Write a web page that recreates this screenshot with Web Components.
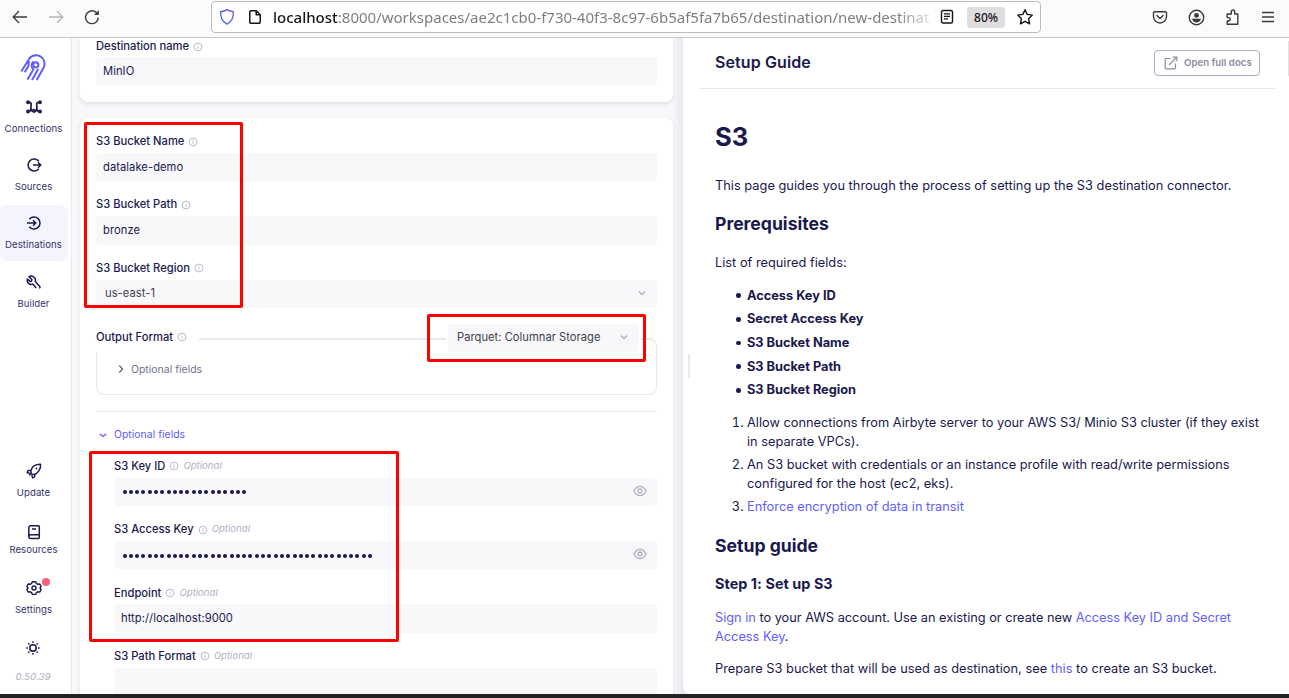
<!DOCTYPE html>
<html lang="en">
<head>
<meta charset="utf-8">
<title>Airbyte</title>
<style>
html,body{margin:0;padding:0;width:1289px;height:698px;overflow:hidden;background:#f8f8fb;font-family:Inter,sans-serif;color:#1a194d}
</style>
</head>
<body>
<app-window></app-window>
<script>
const ICONS={
back:['0 0 16 16','<path d="M15 8H1.5M7 2 1.2 8 7 14" stroke-width="1.3"/>'],
forward:['0 0 16 16','<path d="M1 8h13.5M9 2l5.8 6L9 14" stroke-width="1.3"/>'],
reload:['0 0 16 16','<path d="M14.3 8.6a6.4 6.4 0 1 1-2.2-5.2l2 1.9" stroke-width="1.4"/><path d="M14.9 1.2v4.9H10z" fill="currentColor" stroke="none"/>'],
shield:['0 0 16 18','<defs><linearGradient id="g" x1="0" y1="1" x2="1" y2="0"><stop stop-color="#2a62e8"/><stop offset="1" stop-color="#7a55e8"/></linearGradient></defs><path d="M8 1.6c2 1.3 4 1.9 6.300 2.100 0 6-.9 9.500-6.300 12.500C2.600 13.200 1.700 9.700 1.700 3.700 4 3.500 6 2.900 8 1.600z" stroke="url(#g)" stroke-width="1.300"/>'],
page:['0 0 14 16','<path d="M8.200 1.700H3A1.200 1.200 0 0 0 1.800 2.900v10.200A1.200 1.200 0 0 0 3 14.300h8a1.200 1.200 0 0 0 1.200-1.200V5.700zv4h4" stroke-width="1.500" stroke-linejoin="round"/>'],
reader:['0 0 14 16','<rect x="1.500" y="1.500" width="11" height="12.500" rx="1.500" stroke-width="1.400"/><path d="M4 4.800h6M4 7.300h6M4 9.800h4" stroke-width="1.200"/>'],
star:['0 0 18 18','<path d="M9 1.700l2.200 4.700 5.100.7-3.700 3.600.9 5.100L9 13.300l-4.500 2.500.9-5.100L1.700 7.100l5.100-.7z" stroke-width="1.400" stroke-linejoin="round"/>'],
pocket:['0 0 16 16','<path d="M2.500 2.700h11a1 1 0 0 1 1 1v3.800a6.500 6.500 0 0 1-13 0V3.700a1 1 0 0 1 1-1zM4.900 6.500 8 9.500l3.100-3" stroke-width="1.400" stroke-linecap="round" stroke-linejoin="round"/>'],
account:['0 0 16 16','<circle cx="8" cy="8" r="6.800" stroke-width="1.300"/><circle cx="8" cy="6" r="2.300" fill="currentColor" stroke="none"/><path d="M3.900 9.200h8.200c-.4 2.500-2 3.500-4.100 3.500s-3.700-1-4.100-3.500z" fill="currentColor" stroke="none"/>'],
puzzle:['0 0 16 18','<path d="M2.200 16.300h10.600V6H9.700V4c0-1.300-.7-2-1.700-2s-1.700.7-1.700 2v2H2.200v3.600h1.400c1.100 0 1.700.7 1.700 1.700s-.6 1.700-1.700 1.700H2.200z" stroke-width="1.400" stroke-linejoin="round"/>'],
menu:['0 0 14 14','<path d="M1 2.500h12M1 7h12M1 11.500h12" stroke-width="1.300"/>'],
logo:['0 0 26 27','<path d="M1.300 17.600 9.500 4.300C11 2.200 13.300 1.200 16 1.200c6.500 0 10.600 6.800 7.300 13L16.700 26M4.700 18.200l3.400-5.600c1-1.800.2-3.600.9-5.600M7.500 25.500l5.800-10c-2.400-2.200-2.200-6.200.2-8M12 26l6.200-11" stroke-width="2"/><circle cx="15.800" cy="10.800" r="2.600" stroke-width="2"/>'],
connections:['0 0 16 14','<g stroke-width="1.700"><circle cx="2" cy="2.300" r="1.100"/><circle cx="2" cy="11.500" r="1.100"/><circle cx="14" cy="2.300" r="1.100"/><circle cx="14" cy="11.500" r="1.100"/><circle cx="8" cy="10.800" r="1.300"/><path d="M3 2.300c3 0 2 2 2 4.500s-.3 4.500-2 4.700M5 8.500c0 2 .8 2.500 2 2.500M13 2.300c-3 0-2.200 2-2.200 4.500s.3 4.700 2.200 4.700M10.800 8.500c0 2-.5 2.400-1.800 2.400"/></g>'],
source:['0 0 16 16','<path d="M12.800 4.300a6 6 0 1 0 0 7.400M7 8h7.800M12 5.300 14.700 8 12 10.700" stroke-width="1.500"/>'],
destination:['0 0 16 16','<path d="M3.300 4.300a6 6 0 1 1 0 7.400M1 8h8.500M7 5.300 9.700 8 7 10.700" stroke-width="1.500"/>'],
builder:['0 0 16 16','<path d="M7.300 2.600C5.800 1.800 4.200 1.900 3 2.700l2.800 2.900-.3 1.600-1.600.2L1.500 5c-.6 2.200.2 4.200 1.900 5 1.200.6 2.400.5 3.300.1l3.500 4M7.300 2.600c1.800 1 2.600 2.800 2 5l4.400 4.800c.5.700.3 1.500-.4 1.800" stroke-width="1.500" stroke-linejoin="round"/>'],
rocket:['0 0 16 16','<path d="M6 11.200C3.900 9.500 5 4.700 8.400 2.700 10.300 1.600 12.700 1.200 14.600 1.300c.2 2-.2 4.300-1.600 6.300C11 10.500 8 12 6 11.200zM4.800 7.300l-2.800.2-.9 2.200 3.200.7M8.900 11.200l-.3 2.600-2 1.100-.9-3M4.700 10.700l-1.500 1.700" stroke-width="1.400" stroke-linejoin="round"/><circle cx="10.500" cy="5.500" r=".9" fill="currentColor" stroke="none"/>'],
book:['0 0 14 16','<path d="M3.800 1.700h7.500a1 1 0 0 1 1 1v10.800a1 1 0 0 1-1 1H3.800a2 2 0 0 1-2-2V3.700a2 2 0 0 1 2-2zM2 12c.4-1 1-1.300 2-1.300h8M5 5h4" stroke-width="1.500"/>'],
gear:['0 0 16 16','<path d="M6.300 1.700h3.400l.7 1.800 1.400.8 2-.3 1.300 2.600L14 8l1.100 1.500-1.400 2.600-1.900-.3-1.400.8-.7 1.800H6.300l-.7-1.800-1.400-.8-1.900.3L.9 9.500 2 8 .9 6.600 2.200 4l2 .3 1.400-.8z" stroke-width="1.400" stroke-linejoin="round"/><circle cx="8" cy="8" r="2" stroke-width="1.400"/>'],
sun:['0 0 16 16','<circle cx="8" cy="8" r="3.200" stroke-width="1.500"/><path d="M8 1.300v1.600M8 13.100v1.600M1.300 8h1.600M13.100 8h1.600M3.300 3.300l1.100 1.100M11.600 11.600l1.100 1.100M3.300 12.700l1.100-1.100M11.600 4.400l1.100-1.100" stroke-width="1.400"/>'],
info:['0 0 10 10','<circle cx="5" cy="5" r="3.900" stroke-width=".9"/><path d="M5 4.500v2.600M5 2.700v1" stroke-width=".9"/>'],
down:['0 0 10 10','<path d="M1.800 3.500 5 6.500l3.200-3" stroke-width="1.300"/>'],
downbold:['0 0 10 10','<path d="M1.800 3.800 5 6.500l3.200-2.700" stroke-width="1.600" opacity=".85"/>'],
right:['0 0 10 10','<path d="M3.300 1.500 6.500 5 3.300 8.500" stroke-width="1.500"/>'],
eye:['0 0 14 12','<path d="M.9 6C2.500 2.800 4.500 1.300 7 1.300S11.500 2.800 13.100 6C11.500 9.200 9.500 10.700 7 10.700S2.500 9.200.9 6z" stroke-width="1.300"/><circle cx="7" cy="6" r="2" stroke-width="1.300"/>'],
external:['0 0 14 14','<path d="M6.500 2.500H2.200a1 1 0 0 0-1 1v8.300a1 1 0 0 0 1 1h8.300a1 1 0 0 0 1-1V7.500M8.700 1.200h4.100v4.100M12.600 1.400 5 9" stroke-width="1.200"/>']
};
class UiIcon extends HTMLElement{
  connectedCallback(){
    const [box,body]=ICONS[this.getAttribute('name')];
    const w=this.getAttribute('w'),h=this.getAttribute('h')||w;
    this.attachShadow({mode:'open'}).innerHTML=`<style>:host{display:block;flex:none;width:${w}px;height:${h}px}svg{display:block;width:100%;height:100%}</style><svg viewBox="${box}" fill="none" stroke="currentColor">${body}</svg>`;
  }
}
customElements.define('ui-icon',UiIcon);

const define=(name,render)=>customElements.define(name,class extends HTMLElement{
  connectedCallback(){this.attachShadow({mode:'open'}).innerHTML=render(this);}
});

define('browser-bar',()=>`<style>
:host{display:flex;align-items:center;box-sizing:border-box;height:38px;padding:0 14px 3px 12px;background:#fbfbfb;border-bottom:1px solid #c6c6c8;color:#3b3b3f}
.nav{display:flex;gap:20px;width:199px}
.nav ui-icon:nth-child(2){color:#b5b5b8}
.url{display:flex;align-items:center;box-sizing:border-box;width:830px;height:32px;padding:0 6px 0 7px;border:1px solid #bdbdc0;border-radius:4px;background:#fff;color:#15141a}
.address{flex:1;margin-left:11px;margin-right:9px;white-space:nowrap;font:15px/22px "Noto Sans",sans-serif;letter-spacing:0;color:#7e7e82;-webkit-mask-image:linear-gradient(90deg,#000 95%,transparent 101%)}
.address b{font-weight:500;color:#15141a}
.zoom{box-sizing:border-box;width:38px;height:21px;margin:0 11px 0 13px;border-radius:3px;background:#dededf;font:500 12px/21px "Noto Sans",sans-serif;text-align:center}
.tools{display:flex;align-items:center;gap:20px;margin-left:auto}
</style>
<div class="nav"><ui-icon name="back" w="16"></ui-icon><ui-icon name="forward" w="16"></ui-icon><ui-icon name="reload" w="16"></ui-icon></div>
<div class="url"><ui-icon name="shield" w="16" h="18"></ui-icon><ui-icon name="page" w="14" h="16" style="margin-left:13px"></ui-icon>
<div class="address"><b>localhost</b>:8000/workspaces/ae2c1cb0-f730-40f3-8c97-6b5af5fa7b65/destination/new-destinat</div>
<ui-icon name="reader" w="14" h="16"></ui-icon><div class="zoom">80%</div><ui-icon name="star" w="18"></ui-icon></div>
<div class="tools"><ui-icon name="pocket" w="16"></ui-icon><ui-icon name="account" w="17"></ui-icon><ui-icon name="puzzle" w="16" h="18"></ui-icon><ui-icon name="menu" w="14"></ui-icon></div>`);

define('nav-item',el=>`<style>
:host{display:flex;flex-direction:column;align-items:center;box-sizing:border-box;position:relative;width:68px;height:56px;padding-top:10px;border-radius:8px;color:#1a194d;font-size:9.600px;line-height:12px}
:host([active]){background:#f4f4ff}
ui-icon{margin-right:1px}
span{margin-top:var(--gap,8px);margin-right:1px;letter-spacing:.06px;color:#34336b}
i{position:absolute;left:42px;top:2px;width:8px;height:8px;border-radius:50%;background:#ff5e7b}
</style><ui-icon name="${el.getAttribute('icon')}" w="16"></ui-icon><span><slot></slot></span>${el.hasAttribute('dot')?'<i></i>':''}`);

define('side-nav',()=>`<style>
:host{display:flex;flex-direction:column;box-sizing:border-box;width:72px;background:#fff;border-right:1px solid #e8e8ef}
.logo{padding:16px 0 7.500px 20px;color:#615eff}
.top{display:flex;flex-direction:column;gap:2.400px}
.bottom{margin-top:auto;padding-bottom:10px}
.sun{padding:0 0 0 25px}
.version{width:66px;margin-top:14px;text-align:center;font-size:9.600px;line-height:14px;letter-spacing:.1px;font-style:italic;color:#afafc1}
</style>
<div class="logo"><ui-icon name="logo" w="26" h="27"></ui-icon></div>
<div class="top"><nav-item icon="connections">Connections</nav-item><nav-item icon="source">Sources</nav-item><nav-item icon="destination" active>Destinations</nav-item><nav-item icon="builder">Builder</nav-item></div>
<div class="bottom"><nav-item icon="rocket" style="height:60px;padding-top:3px;--gap:8px">Update</nav-item><nav-item icon="book" style="padding-top:4px;--gap:4px">Resources</nav-item><nav-item icon="gear" style="height:64px;padding-top:4px" dot>Settings</nav-item>
<div class="sun"><ui-icon name="sun" w="16"></ui-icon></div><div class="version">0.50.39</div></div>`);

define('field-label',el=>`<style>
:host{display:flex;align-items:center;height:16px;font-size:11.200px;font-weight:500;line-height:16px;color:#1a194d;white-space:nowrap}
ui-icon{margin:1px 0 0 4px;color:#b3b3c6}
em{margin-left:4px;font-weight:400;font-size:9.600px;color:#afafc1}
</style><slot></slot><ui-icon name="info" w="10"></ui-icon>${el.hasAttribute('optional')?'<em>Optional</em>':''}`);

define('form-field',el=>{
const t=el.getAttribute('type')||'text',v=el.getAttribute('value')||'';
const n=+el.getAttribute('count');
return `<style>
:host{display:block;height:49px;margin-bottom:14.350px}
.input{display:flex;align-items:center;justify-content:space-between;box-sizing:border-box;height:29px;margin-top:var(--input-gap,4px);padding:0 10px 1px 7px;border-radius:4px;background:#f8f8fa;font-size:11.200px;line-height:16px;letter-spacing:.05px;color:#1a194d}
.input.select{height:28px;padding-left:9px;padding-right:10px;color:#40404d}
.input.secret{height:28px;padding-bottom:2px}
.input ui-icon{color:#afafc1}
.dots{display:flex;padding:3px 0 0 1.500px}
.dots i{width:4px;height:4px;margin-right:2.310px;border-radius:50%;background:#1a194d}
</style><field-label ${el.hasAttribute('optional')?'optional':''}>${el.getAttribute('label')}</field-label>
<div class="input ${t}">${t==='secret'?`<span class="dots">${'<i></i>'.repeat(n)}</span><ui-icon name="eye" w="14" h="12"></ui-icon>`:`<span>${v}</span>${t==='select'?'<ui-icon name="down" w="10"></ui-icon>':''}`}</div>`});

define('format-group',()=>`<style>
:host{display:block;position:relative;height:73px;margin-top:-1.300px}
:host::before{content:"";position:absolute;inset:16px 0 0;border:1px solid #e8e8ef;border-top-width:2px;border-radius:8px}
header{display:flex;justify-content:space-between;position:relative;height:30px}
.legend{box-sizing:border-box;width:103px;height:30px;padding-top:7px;background:#fff}
.choice{display:flex;align-items:center;justify-content:space-between;box-sizing:border-box;width:195px;height:28px;margin:2px 16px 0 0;padding:0 10px 2px 9px;border:solid #fff;border-width:0 2px;border-radius:4px;background:#f8f8fa;background-clip:padding-box;font-size:11.200px;letter-spacing:.02px;color:#40404d}
.choice ui-icon{margin-top:1px;color:#afafc1}
.more{display:flex;align-items:center;gap:5px;position:relative;height:16px;margin:9.500px 0 0 20px;font-size:10.400px;letter-spacing:.03px;color:#717189}
.more ui-icon{margin-bottom:1px}
</style><header><div class="legend"><field-label>Output Format</field-label></div><div class="choice"><span>Parquet: Columnar Storage</span><ui-icon name="down" w="10"></ui-icon></div></header>
<div class="more"><ui-icon name="right" w="10"></ui-icon><span>Optional fields</span></div>`);

define('form-card',()=>`<style>:host{display:block;box-sizing:border-box;width:593px;padding:15px 16px;border-radius:8px;background:#fff;box-shadow:0 2px 4px rgba(26,25,77,.12)}</style><slot></slot>`);

define('connector-form',()=>`<style>
:host{display:block;box-sizing:border-box;width:611px;padding-left:8px;overflow:hidden;background:linear-gradient(90deg,#f8f8fb 0 601px,#f3f3f6 604px,#e6e6ee)}
.first{height:64px;padding-top:0;border-radius:0 0 8px 8px;margin-bottom:16px;--input-gap:3px}
.second{height:600px}
hr{height:1px;margin:16px 0 14px;border:0;background:#e8e8ef}
.toggle{display:flex;align-items:center;gap:6px;height:16px;margin:14.500px 0 15.600px 2px;font-size:10.400px;letter-spacing:.03px;color:#615eff}
.toggle ui-icon{margin-top:2px}
.nested{padding-left:18px}
</style>
<form-card class="first"><form-field label="Destination name" value="MinIO"></form-field></form-card>
<form-card class="second"><form-field label="S3 Bucket Name" value="datalake-demo"></form-field><form-field label="S3 Bucket Path" value="bronze"></form-field><form-field label="S3 Bucket Region" value="us-east-1" type="select"></form-field>
<format-group></format-group><hr><div class="toggle"><ui-icon name="downbold" w="10"></ui-icon><span>Optional fields</span></div>
<div class="nested"><form-field label="S3 Key ID" type="secret" count="20" optional></form-field><form-field label="S3 Access Key" type="secret" count="40" optional></form-field><form-field label="Endpoint" value="http://localhost:9000" style="--input-gap:3.500px" optional></form-field><form-field label="S3 Path Format" optional></form-field></div></form-card>`);

define('doc-panel',()=>`<style>
:host{display:block;box-sizing:border-box;position:relative;flex:1;background:#fff;border-radius:0 0 0 8px;overflow:hidden;color:#1a194d;font-size:12.800px;line-height:19.200px}
.grip{position:absolute;left:5px;top:316px;width:2px;height:24px;background:#e8e8ef}
.scroll{position:absolute;right:0;top:3px;width:1px;height:35px;background:#e2e2e6}
header{display:flex;align-items:center;justify-content:space-between;box-sizing:border-box;height:51px;margin:0 13px 0 16px;padding:0 16px 0;border-bottom:1px solid #e8e8ef}
header b{margin-bottom:2px;font-size:16px;font-weight:600;line-height:20px;letter-spacing:.1px}
button{display:flex;align-items:center;gap:6px;box-sizing:border-box;width:106px;height:26px;padding:0 0 0 9px;border:1px solid #afafc1;border-radius:4px;background:#fff;font:600 9.600px/14px Inter,sans-serif;letter-spacing:.05px;color:#8b8ba0;white-space:nowrap}
article{padding:32px 20px 0 32px}
h1,h2,h3,p,ul,ol{margin:0}
h1{font-size:25.600px;line-height:32px}
h2{font-size:17.600px;font-weight:700;line-height:24px}
h3{font-size:14.400px;line-height:20px;letter-spacing:.05px}
ul,ol{padding-left:32px}
ul{font-weight:700;list-style:none}
ul li{display:flex;align-items:center;margin-bottom:4.500px;letter-spacing:-.02px}
ul li::before{content:"";width:4.600px;height:4.600px;margin:1px 6.400px 0 -11px;border-radius:50%;background:#1a194d}
ol li{margin-bottom:3.800px}
a{color:#615eff}
</style>
<div class="grip"></div><div class="scroll"></div>
<header><b>Setup Guide</b><button><ui-icon name="external" w="14"></ui-icon>Open full docs</button></header>
<article><h1>S3</h1>
<p style="margin-top:23px;letter-spacing:.015px">This page guides you through the process of setting up the S3 destination connector.</p>
<h2 style="margin-top:17px">Prerequisites</h2>
<p style="margin-top:16.500px">List of required fields:</p>
<ul style="margin-top:13.600px"><li>Access Key ID</li><li>Secret Access Key</li><li>S3 Bucket Name</li><li>S3 Bucket Path</li><li>S3 Bucket Region</li></ul>
<ol style="margin-top:13px"><li><span style="letter-spacing:-.015px">Allow connections from Airbyte server to your AWS S3/ Minio S3 cluster (if they exist</span><br>in separate VPCs).</li><li>An S3 bucket with credentials or an instance profile with read/write permissions<br>configured for the host (ec2, eks).</li><li><a>Enforce encryption of data in transit</a></li></ol>
<h2 style="margin-top:18.200px">Setup guide</h2>
<h3 style="margin-top:15.500px">Step 1: Set up S3</h3>
<p style="margin-top:14.200px;letter-spacing:-.02px"><a>Sign in</a> to your AWS account. Use an existing or create new <a>Access Key ID and Secret<br>Access Key</a>.</p>
<p style="margin-top:12.600px;letter-spacing:.025px">Prepare S3 bucket that will be used as destination, see <a>this</a> to create an S3 bucket.</p>
</article>`);

define('app-window',()=>`<style>
:host{display:flex;flex-direction:column;position:relative;width:1289px;height:698px;overflow:hidden}
main{display:flex;height:656px;background:#e9e9ef}
footer{height:4px;background:#212224}
.mark{position:absolute;box-sizing:border-box;border:3px solid #f00;border-radius:2px}
</style><browser-bar></browser-bar><main><side-nav></side-nav><connector-form></connector-form><doc-panel></doc-panel></main><footer></footer>
<div class="mark" style="left:84px;top:122px;width:159px;height:186px"></div>
<div class="mark" style="left:427px;top:314px;width:219px;height:48px"></div>
<div class="mark" style="left:89px;top:451px;width:310px;height:191px"></div>`);
</script>
</body>
</html>
